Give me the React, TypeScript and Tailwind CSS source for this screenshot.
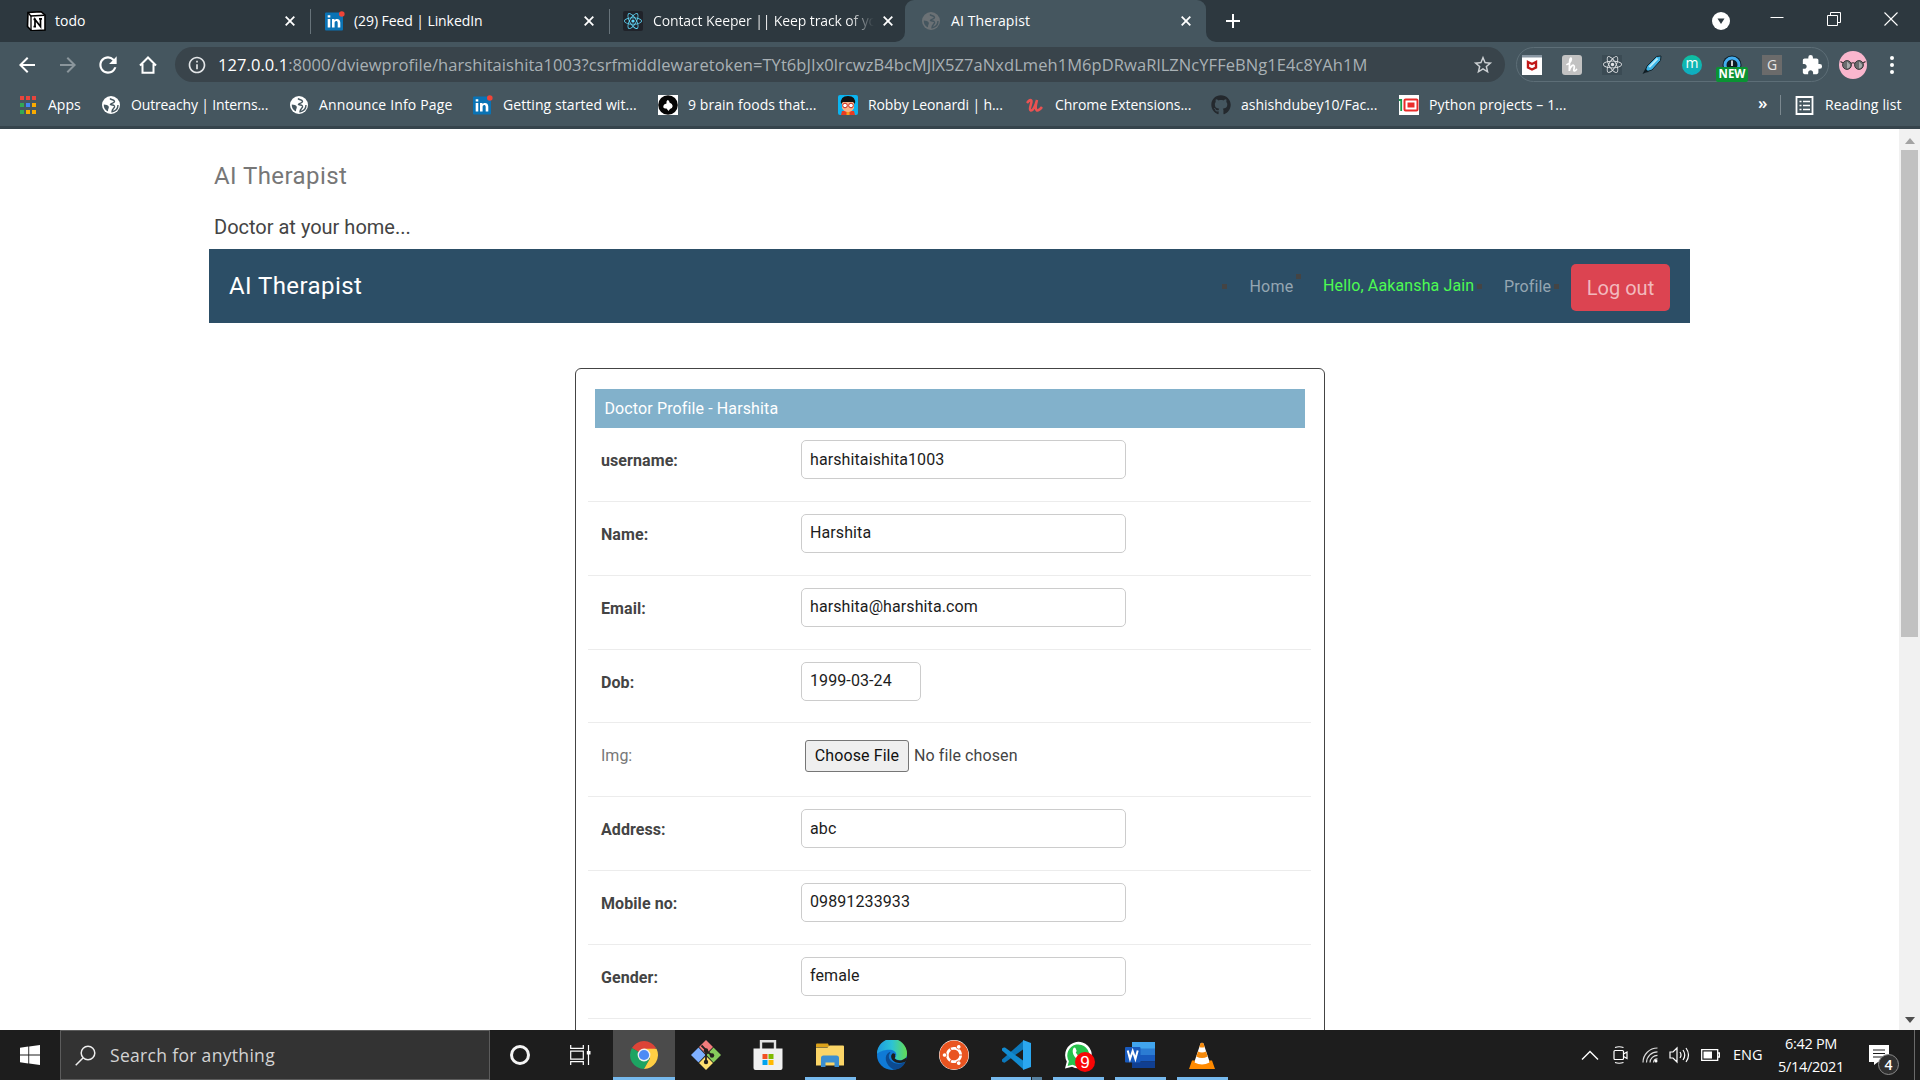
import type { ReactNode } from "react";
import { FaReact, FaGithub, FaUbuntu } from "react-icons/fa";
import { MdArrowBack, MdArrowForward, MdRefresh, MdStarBorder, MdInfoOutline, MdExtension } from "react-icons/md";

function Cell({ className, children }: { className: string; children?: ReactNode }) {
  return <div className={"flex shrink-0 items-center justify-center " + className}>{children}</div>;
}

/* ---------- small brand icons ---------- */

function NotionIcon() {
  return (
    <svg viewBox="0 0 20 20" className="size-5 shrink-0">
      <path d="M2 1.500 15 .6 19 4v15L5.500 19.700 1.500 15.500z" fill="#fff" stroke="#000" strokeWidth="1.600" />
      <path d="M2 1.500 5 5.300v14.200" fill="none" stroke="#000" strokeWidth="1.300" />
      <path d="M4.500 5 18.500 4.300" stroke="#000" strokeWidth="1.600" />
      <path d="M9 15.500V8.500l5.500 7V8M7.500 8.300h2.500M13 7.800h3M7.500 15.700H10" fill="none" stroke="#000" strokeWidth="1.700" />
    </svg>
  );
}

function LinkedinIcon() {
  return (
    <svg viewBox="0 0 20 20" className="size-5 shrink-0 overflow-visible">
      <rect x="0" y="1.500" width="18" height="18" rx="1" fill="#0a73b5" />
      <path d="M2.700 8h2.600v8.500H2.700zM2.700 4.300h2.600v2.300H2.700zM7 8h2.500v1.200C10.800 7.200 15.300 7.200 15.300 11.500v5h-2.600v-4.600c0-2.700-3.100-2.400-3.100 0v4.600H7z" fill="#fff" />
      <circle cx="16.800" cy="3" r="2.800" fill="#f04438" />
    </svg>
  );
}

function Globe({ fg, bg }: { fg: string; bg: string }) {
  return (
    <svg viewBox="0 0 18 18" className="size-[18px] shrink-0">
      <circle cx="9" cy="9" r="9" fill={fg} />
      <path d="M8 2.500C9.500 4.500 12 3 12.500 5.500c0 1.800-3.500 1.300-4 3 1.500 1 4.500 0 4 2.500-.5 1.500-2.500 2-2.500 4.700 3.500-.5 6-3 6-6.700" fill="none" stroke={bg} strokeWidth="1.400" />
      <path d="M1.800 8.500c2 .2 4.700.7 5 2.300.3 1.500-1 2-.8 4.500C3.300 14.500 1.500 11.500 1.800 8.500z" fill={bg} />
    </svg>
  );
}

function CloseX() {
  return (
    <svg viewBox="0 0 10 10" className="size-[10px] shrink-0">
      <path d="M.7.7 9.300 9.300M9.300.7.700 9.300" stroke="#fff" strokeWidth="1.800" />
    </svg>
  );
}

function AppsGrid() {
  const colors = ["#e8453c", "#e8453c", "#e8453c", "#34a853", "#4285f4", "#f9ab00", "#34a853", "#f9ab00", "#f9ab00"];
  return (
    <div className="grid grid-cols-3 gap-x-[2px] gap-y-[3px]">
      {colors.map((c, i) => (
        <span key={i} className="size-[4px]" style={{ backgroundColor: c }} />
      ))}
    </div>
  );
}

/* ---------- browser chrome ---------- */

function Tabs() {
  return (
    <div className="flex h-[42px] bg-[#2d383f] text-[14px] text-white">
      <div className="flex h-[42px] w-[310px] shrink-0 items-center pl-[26px]">
        <NotionIcon />
        <span className="w-[239px] pb-[2px] pl-[9px]">todo</span>
        <CloseX />
      </div>
      <div className="mt-[9px] h-[25px] w-px bg-[#67737a]" />
      <div className="flex h-[42px] w-[298px] shrink-0 items-center pl-[14px]">
        <LinkedinIcon />
        <span className="w-[239px] pb-[2px] pl-[9px] tracking-[-0.080px]">(29) Feed | LinkedIn</span>
        <CloseX />
      </div>
      <div className="mt-[9px] h-[25px] w-px bg-[#67737a]" />
      <div className="flex h-[42px] w-[297px] shrink-0 items-center pl-[13px]">
        <Cell className="size-5 rounded-[2px] bg-[#20232a]"><FaReact className="size-[18px] text-[#61dafb]" /></Cell>
        <span className="ml-[10px] w-[230px] bg-gradient-to-r from-white from-85% to-transparent to-96% bg-clip-text pb-[2px] tracking-[-0.120px] whitespace-nowrap text-transparent">Contact Keeper || Keep track of yo</span>
        <CloseX />
      </div>
      <div className="relative -ml-[2px] flex h-[42px] w-[301px] shrink-0 items-center rounded-t-[9px] bg-[#45565f] pl-[17px]">
        <Globe fg="#6b7175" bg="#45565f" />
        <span className="w-[241px] pb-[2px] pl-[11px] tracking-[0.100px]">AI Therapist</span>
        <CloseX />
        <svg viewBox="0 0 10 10" className="absolute bottom-0 -left-[10px] size-[10px]"><path d="M10 0v10H0A10 10 0 0 0 10 0" fill="#45565f" /></svg>
        <svg viewBox="0 0 10 10" className="absolute -right-[10px] bottom-0 size-[10px]"><path d="M0 0v10h10A10 10 0 0 1 0 0" fill="#45565f" /></svg>
      </div>
      <Cell className="ml-[11px] w-[32px]">
        <svg viewBox="0 0 16 16" className="size-4"><path d="M8 1v14M1 8h14" stroke="#fff" strokeWidth="2" /></svg>
      </Cell>
      <div className="grow" />
      <Cell className="w-[36px]">
        <svg viewBox="0 0 18 18" className="size-[18px]"><circle cx="9" cy="9" r="9" fill="#fff" /><path d="M5.500 6.500h7L9 12z" fill="#2d383f" /></svg>
      </Cell>
      <Cell className="h-[37px] w-[76px]">
        <svg viewBox="0 0 14 14" className="size-[14px]"><path d="M.500 5.500h13" stroke="#fff" /></svg>
      </Cell>
      <Cell className="h-[37px] w-[37px]">
        <svg viewBox="0 0 14 14" className="size-[14px]"><path d="M.500 3.500h10v10H.5zM3.500 3.500V.5h10v10h-3" fill="none" stroke="#fff" /></svg>
      </Cell>
      <Cell className="-mr-[9px] h-[37px] w-[77px]">
        <svg viewBox="0 0 14 14" className="size-[14px]"><path d="M.500.5l13 13M13.500.5l-13 13" stroke="#fff" strokeWidth="1.100" /></svg>
      </Cell>
    </div>
  );
}

function Toolbar() {
  return (
    <div className="flex h-[45px] items-center bg-[#45565f] text-white">
      <Cell className="ml-[7px] w-[40px]"><MdArrowBack className="size-6" /></Cell>
      <Cell className="w-[41px]"><MdArrowForward className="size-6 text-[#8b969c]" /></Cell>
      <Cell className="w-[40px]"><MdRefresh className="size-[26px]" /></Cell>
      <Cell className="w-[39px]">
        <svg viewBox="0 0 18 18" className="size-[18px]"><path d="M1 9.500 9 1.500l8 8M3.500 8v8.800h11V8" fill="none" stroke="#fff" strokeWidth="2" /></svg>
      </Cell>
      <div className="ml-[8px] flex h-[35px] w-[1330px] items-center rounded-full bg-[#39444b] pl-[12px] text-[#a9b1b5]">
        <MdInfoOutline className="size-5 shrink-0 text-[#e3e6e8]" />
        <span className="w-[1265px] shrink-0 pl-[11px] text-[16.500px] leading-[22px] tracking-[0.065px] whitespace-nowrap">
          <span className="text-white">127.0.0.1</span>:8000/dviewprofile/harshitaishita1003?csrfmiddlewaretoken=TYt6bJIx0lrcwzB4bcMJlX5Z7aNxdLmeh1M6pDRwaRlLZNcYFFeBNg1E4c8YAh1M
        </span>
        <MdStarBorder className="size-[22px] shrink-0 text-[#cdd1d4]" />
      </div>
      <div className="ml-[11px] flex h-[35px] w-[313px] items-center rounded-full border border-[#5d6e77]">
        <Cell className="ml-[-5px] w-[40px]">
          <svg viewBox="0 0 20 20" className="size-5"><path d="M0 0h20v20H0z" fill="#fff" /><path d="M0 0h20v2.500H0z" fill="#8896a2" /><path d="M6 7l4 2 4-2v5.500l-4 2-4-2z" fill="#fff" stroke="#c01818" strokeWidth="2.400" /></svg>
        </Cell>
        <Cell className="w-[40px]">
          <Cell className="size-5 rounded-[3px] bg-[#c2c2c2]">
            <svg viewBox="0 0 20 20" className="size-5"><path d="M5 9.500C8 9 10.500 3.500 8.800 3.200 7.500 3.200 7.500 8 7.300 16c.7-5 4.700-7.500 5-4.500.1 2-1.300 4.500.2 4.500 1 0 1.500-.8 2-1.500" fill="none" stroke="#fff" strokeWidth="1.700" strokeLinecap="round" /></svg>
          </Cell>
        </Cell>
        <Cell className="w-[40px]"><Cell className="size-5 bg-[#3b4b54]"><FaReact className="size-[19px] text-[#e4e6e8]" /></Cell></Cell>
        <Cell className="w-[40px]">
          <svg viewBox="0 0 20 20" className="size-5"><path d="M14.500 1.500 19 1l-.5 4.500L10 15l-5 1.500L3.500 15 5 11z" fill="#3cb4e6" stroke="#14242c" strokeWidth="1" /><path d="M14.500 3 6.500 11.500l1.500 1.200L16.500 4z" fill="#b3ecfb" /><path d="M3.500 13.500 7 17l-3 .500L.5 19z" fill="#101d24" /></svg>
        </Cell>
        <Cell className="w-[40px]"><Cell className="size-5 rounded-full bg-[linear-gradient(#0fbf9f,#0facc4)] pb-[3px] text-[14px] leading-none">m</Cell></Cell>
        <Cell className="relative w-[40px]">
          <svg viewBox="0 0 20 20" className="size-5"><circle cx="10" cy="10" r="9.500" fill="#0c1a22" /><circle cx="10" cy="10" r="7" fill="#101d25" stroke="#43aef0" strokeWidth="3" /><path d="M10 5.500V11" stroke="#fff" strokeWidth="1.600" /></svg>
          <span className="absolute top-[12px] left-[4px] flex h-[15px] w-[32px] items-center justify-center rounded-[2px] bg-[#0a9333] text-[11.500px] leading-none font-bold">NEW</span>
        </Cell>
        <Cell className="w-[40px]"><Cell className="size-5 bg-[#6b6b6b] text-[14px] leading-none text-[#e6e6e6]">G</Cell></Cell>
        <Cell className="w-[40px]"><MdExtension className="size-[22px]" /></Cell>
      </div>
      <Cell className="ml-[10px] w-[28px]">
        <svg viewBox="0 0 28 28" className="size-7"><circle cx="14" cy="14" r="14" fill="#f9b6cd" /><path d="M1.500 10.500 4 12M26.500 10.500 24 12M12 12.500q2-1.500 4 0" stroke="#3a3033" strokeWidth="1.200" fill="none" /><circle cx="8" cy="14" r="4.400" fill="#6a6c6e" stroke="#3a3a3c" strokeWidth="1" /><circle cx="20" cy="14" r="4.400" fill="#6a6c6e" stroke="#3a3a3c" strokeWidth="1" /><path d="M8 10.500v7a3.500 3.500 0 0 0 3-4zM20 10.500v7a3.500 3.500 0 0 0 3-4z" fill="#a7a9aa" /></svg>
      </Cell>
      <Cell className="ml-[23px] w-[4px] flex-col gap-[3px]">
        <i className="size-[4px] rounded-full bg-white" /><i className="size-[4px] rounded-full bg-white" /><i className="size-[4px] rounded-full bg-white" />
      </Cell>
    </div>
  );
}

function Bookmark({ className, icon, label }: { className: string; icon: ReactNode; label: string }) {
  return (
    <div className={"flex shrink-0 items-center whitespace-nowrap " + className}>
      <Cell className="w-5">{icon}</Cell>
      <span className="pb-[2px] pl-[10px]">{label}</span>
    </div>
  );
}

function Bookmarks() {
  return (
    <div className="flex h-[42px] items-center border-b-[3px] border-[#36444c] bg-[#45565f] pb-[3px] pl-[18px] text-[14px] text-white">
      <Bookmark className="w-[83px]" icon={<AppsGrid />} label="Apps" />
      <Bookmark className="w-[188px] tracking-[-0.150px]" icon={<Globe fg="#fff" bg="#45565f" />} label="Outreachy | Interns..." />
      <Bookmark className="w-[184px] tracking-[0.150px]" icon={<Globe fg="#fff" bg="#45565f" />} label="Announce Info Page" />
      <Bookmark className="w-[185px] tracking-[0.080px]" icon={<LinkedinIcon />} label="Getting started wit..." />
      <Bookmark
        className="w-[180px] tracking-[0.060px]"
        icon={<svg viewBox="0 0 20 20" className="size-5"><path d="M0 0h20v20H0z" fill="#fff" /><circle cx="10" cy="10" r="9.800" fill="#050505" /><path d="M9.500 5Q11.500 5 11.500 7.500 14.500 8.500 14.700 11 14.500 13.500 12 14L10.500 16 8.500 13.500Q5 13.500 5.300 11.500 5.500 9 8.500 8.500 8 6 9.500 5z" fill="#fff" /></svg>}
        label="9 brain foods that..."
      />
      <Bookmark
        className="w-[187px] tracking-[-0.120px]"
        icon={<svg viewBox="0 0 20 20" className="size-5"><rect width="20" height="20" rx="2" fill="#0bb4f0" /><path d="M4 16h12l1 4H3z" fill="#e83b22" /><path d="M8.500 16h3v4h-3z" fill="#f6a01c" /><path d="M4 6h12v7q-2 4-6 4t-6-4z" fill="#f7b58a" /><path d="M3 9q-1-8 7-8t7 8l-2-2H5z" fill="#111" /><circle cx="7" cy="10.500" r="2.300" fill="#fff" stroke="#c62818" /><circle cx="13" cy="10.500" r="2.300" fill="#fff" stroke="#c62818" /></svg>}
        label="Robby Leonardi | h..."
      />
      <Bookmark
        className="w-[186px] tracking-[-0.060px]"
        icon={<svg viewBox="0 0 20 20" className="size-5"><path d="M2 8Q5.500 3.500 6.500 6c.5 2-3 8-1 9.300 2.500 1.200 5-5 6.500-10.300-1 4-2 9-.3 10.300 1.800 1 3.800-1.500 5.300-3.300" fill="none" stroke="#ea5252" strokeWidth="2.500" /></svg>}
        label="Chrome Extensions..."
      />
      <Bookmark className="w-[188px]" icon={<FaGithub className="size-5 text-[#24292e]" />} label="ashishdubey10/Fac..." />
      <Bookmark
        className="w-[170px] tracking-[0.100px]"
        icon={<svg viewBox="0 0 20 20" className="size-5"><path d="M0 0h20v20H0z" fill="#fff" /><path d="M0 5h2.200v11" fill="none" stroke="#15984a" strokeWidth="1.800" /><rect x="5.500" y="4.500" width="13" height="11" rx="1" fill="none" stroke="#ea2c2a" strokeWidth="2" /><path d="M8.500 7.500h7v5h-7z" fill="#ea2c2a" /></svg>}
        label="Python projects – 1..."
      />
      <div className="grow" />
      <span className="w-[22px] pb-[4px] text-[17px] font-semibold">»</span>
      <div className="h-5 w-px bg-[#7b888f]" />
      <Cell className="ml-[14px] w-[19px]">
        <svg viewBox="0 0 19 19" className="size-[19px]"><path d="M1.500 1h16v17h-16z" fill="none" stroke="#fff" strokeWidth="1.800" /><path d="M4.500 5.500h2m1.500 0h7M4.500 9.500h2m1.500 0h7M4.500 13.500h2m1.500 0h7" stroke="#fff" strokeWidth="1.700" /></svg>
      </Cell>
      <span className="w-[106px] pb-[2px] pl-[11px] tracking-[0.150px] whitespace-nowrap">Reading list</span>
    </div>
  );
}

/* ---------- page ---------- */

function NavBar() {
  return (
    <div className="ml-[209px] flex h-[74px] w-[1481px] shrink-0 bg-[#2c4e66] text-[16px] text-[#95a6b2]">
      <div className="w-[1013px] pt-[19px] pl-[20px] text-[24px] leading-[36px] tracking-[0.420px] text-white">AI Therapist</div>
      <i className="mt-[35px] size-[5px] bg-[#444]" />
      <span className="w-[69px] pt-[26px] pl-[22.500px] leading-6 tracking-[0.200px]">Home</span>
      <i className="mt-[25px] size-[5px] bg-[#444]" />
      <span className="w-[176px] pt-[25px] pl-[22px] leading-6 tracking-[0.130px] whitespace-nowrap text-[#4dfb52]">Hello, Aakansha Jain</span>
      <i className="mt-[35px] size-[5px] bg-[#444]" />
      <span className="w-[72px] pt-[26px] pl-[22px] leading-6 tracking-[0.100px]">Profile</span>
      <i className="mt-[35px] size-[5px] bg-[#444]" />
      <button className="mt-[15px] ml-[12px] h-[47px] w-[99px] rounded-[5px] bg-[#dc4451] pt-[1px] text-[20px] text-[#f2b9be]">Log out</button>
    </div>
  );
}

function Row({ label, children, plain }: { label: string; children: ReactNode; plain?: boolean }) {
  return (
    <div className="ml-[12px] flex h-[73.800px] w-[723px] border-b border-[#ececec] pl-[13px]">
      <span className={plain ? "w-[200px] pt-[21px] text-[#777]" : "w-[200px] pt-[21px] font-bold tracking-[0.080px] text-[#444]"}>{label}</span>
      {children}
    </div>
  );
}

function Field({ value, short }: { value: string; short?: boolean }) {
  return (
    <div className={"mt-[12px] flex h-[39px] items-center rounded-[5px] border border-[#ccc] pl-[8px] tracking-[0.100px] text-[#1c1c1c] " + (short ? "w-[120px]" : "w-[325px]")}>
      {value}
    </div>
  );
}

function ProfileCard() {
  return (
    <div className="mt-[45px] ml-[575px] h-[760px] w-[750px] shrink-0 rounded-[6px] border border-[#444] pt-[20.200px] text-[16px] leading-6">
      <div className="ml-[19px] h-[39px] w-[710px] bg-[#82b1cb] pt-[8px] pl-[9.500px] tracking-[0.120px] text-white">Doctor Profile - Harshita</div>
      <Row label="username:"><Field value="harshitaishita1003" /></Row>
      <Row label="Name:"><Field value="Harshita" /></Row>
      <Row label="Email:"><Field value="harshita@harshita.com" /></Row>
      <Row label="Dob:"><Field value="1999-03-24" short /></Row>
      <Row label="Img:" plain>
        <div className="mt-[17px] ml-[4px] flex h-[32px] w-[104px] items-center justify-center rounded-[3px] border border-[#767676] bg-[#efefef] tracking-[0.100px] text-[#111]">Choose File</div>
        <span className="mt-[21px] ml-[5px] tracking-[0.100px] text-[#444]">No file chosen</span>
      </Row>
      <Row label="Address:"><Field value="abc" /></Row>
      <Row label="Mobile no:"><Field value="09891233933" /></Row>
      <Row label="Gender:"><Field value="female" /></Row>
    </div>
  );
}

function Page() {
  return (
    <div className="flex h-[901px] overflow-hidden bg-white font-['Roboto',sans-serif]">
      <div className="flex h-full w-[1899px] flex-col overflow-hidden">
        <div className="h-[120px] shrink-0 pt-[28px] pl-[214px]">
          <div className="text-[24px] leading-[38px] tracking-[0.420px] text-[#777]">AI Therapist</div>
          <div className="mt-[17px] text-[20px] leading-[30px] text-[#444]">Doctor at your home...</div>
        </div>
        <NavBar />
        <ProfileCard />
      </div>
      <div className="flex w-[21px] flex-col items-center bg-[#f1f1f1]">
        <Cell className="h-[21px]"><svg viewBox="0 0 10 6" className="mt-[3px] h-[6px] w-[10px]"><path d="M0 6 5 0l5 6z" fill="#a3a3a3" /></svg></Cell>
        <div className="h-[487px] w-[17px] bg-[#c1c1c1]" />
        <div className="grow" />
        <Cell className="h-[21px]"><svg viewBox="0 0 10 6" className="h-[6px] w-[10px]"><path d="M0 0h10L5 6z" fill="#505050" /></svg></Cell>
      </div>
    </div>
  );
}

/* ---------- taskbar ---------- */

function TaskIcon({ children, state }: { children: ReactNode; state?: "active" | "open" | "multi" }) {
  return (
    <div className={"flex h-[50px] w-[62px] shrink-0 flex-col items-center " + (state === "active" ? "bg-[#4b4b4b]" : "")}>
      <Cell className="h-[47px] pt-[3px]">{children}</Cell>
      {state === "active" && <div className="h-[3px] w-full bg-[#76b9ed]" />}
      {state === "open" && <div className="h-[3px] w-[51px] bg-[#76b9ed]" />}
      {state === "multi" && (
        <div className="flex h-[3px] w-[51px] bg-[#56809f]"><div className="h-[3px] w-[41px] border-r border-[#1d1d1d] bg-[#76b9ed]" /></div>
      )}
    </div>
  );
}

function TaskIcons() {
  return (
    <div className="flex">
      <TaskIcon state="active">
        <svg viewBox="0 0 28 28" className="size-7">
          <path d="M14 14 1.900 7A14 14 0 0 1 26.100 7z" fill="#dc4437" />
          <path d="M14 14 1.900 7A14 14 0 0 0 14 28l6-10.500z" fill="#1da462" />
          <path d="M14 7.700h12.500A14 14 0 0 1 14 28l6-10.500z" fill="#ffce44" />
          <circle cx="14" cy="14" r="6.400" fill="#f1f1f1" /><circle cx="14" cy="14" r="5.100" fill="#4c8bf5" />
        </svg>
      </TaskIcon>
      <TaskIcon>
        <svg viewBox="0 0 30 30" className="size-[30px]">
          <path d="M15 0l7 7-7 7-7-7z" fill="#f37c7c" /><path d="M7.500 7.500l7 7.500-7 7.500L0 15z" fill="#7fb0ff" /><path d="M22.500 7.500 30 15l-7.500 7.500-7-7.500z" fill="#86cb5c" /><path d="M15 16l7 7-7 7-7-7z" fill="#ffe070" />
          <path d="M10.500 5.500l4.500 4.500v13M15 10.500l6 5" stroke="#24201f" strokeWidth="1.800" fill="none" /><circle cx="15" cy="10.500" r="2.200" fill="#24201f" /><circle cx="21" cy="15.500" r="2.200" fill="#24201f" /><circle cx="15" cy="22" r="2.200" fill="#24201f" />
        </svg>
      </TaskIcon>
      <TaskIcon>
        <svg viewBox="0 0 30 30" className="size-[30px]">
          <path d="M8 9V1.200h14V9" fill="none" stroke="#e2e2e2" strokeWidth="2.400" /><path d="M.500 8.500h29V28a2 2 0 0 1-2 2h-25a2 2 0 0 1-2-2z" fill="#f0f0f0" />
          <path d="M9.500 14H14.500v5h-5z" fill="#f25022" /><path d="M15.500 14h5v5h-5z" fill="#7fba00" /><path d="M9.500 20h5v5h-5z" fill="#00a4ef" /><path d="M15.500 20h5v5h-5z" fill="#ffb900" />
        </svg>
      </TaskIcon>
      <TaskIcon state="open">
        <svg viewBox="0 0 28 24" className="h-6 w-7">
          <path d="M0 1.500Q0 .5 1 .5h11l1.500 3.500H0z" fill="#dca21a" /><path d="M0 4.500h11.500L13.500 2.500H27q1 0 1 1V22.500H0z" fill="#fbd567" /><path d="M5 24v-9q0-2.500 2.500-2.500h13Q23 12.500 23 15v9h-4.500v-4.500h-9V24z" fill="#3c8fd0" />
        </svg>
      </TaskIcon>
      <TaskIcon>
        <svg viewBox="0 0 30 30" className="size-[30px]">
          <defs>
            <linearGradient id="edgeTop" x1="0" x2="1"><stop offset="0" stopColor="#1d9ae0" /><stop offset=".5" stopColor="#2cc3d5" /><stop offset="1" stopColor="#63dd52" /></linearGradient>
          </defs>
          <circle cx="15" cy="15" r="15" fill="#0f7ad6" />
          <path d="M0 14A15 15 0 0 1 30 13.500c0 4.500-3 6.700-6.500 6.700-3 0-5.500-.9-5.500-2.200 0-.8 1.300-1.200 1.300-3.300 0-3-3-5-7-5C6 9.700 2 12 0 14z" fill="url(#edgeTop)" />
          <path d="M12.500 12c-6 3-5 13 4.500 17.800C26 29 28 23 28 22c-7 3.500-14 1-16-4-.6-2.500.3-4.500 1.500-5.500z" fill="#0c4a90" />
          <path d="M18 15q.5 1.500-.3 3.500 2 2.300 7 1.800l5-2.800v3L28 22q-8.500 3-13-2.500-2-4 .5-6 2-.8 3 1.500z" fill="#1d1d1d" />
        </svg>
      </TaskIcon>
      <TaskIcon>
        <FaUbuntu className="size-[30px] rounded-full bg-white text-[#e95420]" />
      </TaskIcon>
      <TaskIcon state="multi">
        <svg viewBox="0 0 30 30" className="size-[30px]">
          <path d="M1 19.500 22 1v8.500L4 22.500Q2.500 23 1 21.500z" fill="#0c78bb" /><path d="M1 10.500 22 29v-8.500L4 7.500Q2.500 7 1 8.500z" fill="#128bd0" /><path d="M22 0l8 3v24l-8 3z" fill="#2ba7ef" />
        </svg>
      </TaskIcon>
      <TaskIcon state="open">
        <div className="relative">
          <svg viewBox="0 0 30 30" className="size-[30px]"><path d="M2 28.500l1.800-7A13.300 13.300 0 1 1 9 26.700z" fill="#fff" /><path d="M4.600 26l1.300-4.800A11 11 0 1 1 9.500 24.800z" fill="#27c24c" /><path d="M10.500 8q1-1 2 0l1.200 3-1 1.500q1.600 3.300 5 4.700l1.600-1.500 3 1.500q.3 3-3.500 3.500C13 20.500 7.500 13 10.500 8z" fill="#fff" /></svg>
          <span className="absolute top-[12px] left-[12px] flex size-5 items-center justify-center rounded-full bg-[#f90606] font-['Liberation_Sans'] text-[17px] leading-none text-white">9</span>
        </div>
      </TaskIcon>
      <TaskIcon state="open">
        <svg viewBox="0 0 30 26" className="h-[26px] w-[30px]">
          <path d="M7 0h23v7H7z" fill="#41a5ee" /><path d="M7 6.500h23V13H7z" fill="#2b7cd3" /><path d="M7 13h23v6.500H7z" fill="#185abd" /><path d="M7 19.500h23V26H7z" fill="#103f91" /><rect y="5" width="15.500" height="15.500" rx="1" fill="#185abd" />
          <path d="M2.700 8.500 5 17l2.700-8 2.700 8 2.300-8.500" fill="none" stroke="#fff" strokeWidth="2" />
        </svg>
      </TaskIcon>
      <TaskIcon state="open">
        <svg viewBox="0 0 26 27" className="h-[27px] w-[26px]">
          <path d="M11.500 1.500q1.500-1.500 3 0L21 21q-8 5-16 0z" fill="#fff" /><path d="M11.500 1.500q1.500-1.500 3 0l1.200 3.500q-2.700 1.200-5.400 0zM9 9.500q4 2 8 0l1.700 5q-5.700 3-11.400 0z" fill="#f58a0c" /><path d="M3 18.500h3l-.5 2q7.500 4 15 0l-.5-2h3L26 27H0z" fill="#ff8a00" />
        </svg>
      </TaskIcon>
    </div>
  );
}

function Tray() {
  return (
    <div className="flex h-[50px] items-center text-white">
      <svg viewBox="0 0 18 10" className="h-[10px] w-[18px]"><path d="M1 9.500l8-8 8 8" fill="none" stroke="#fff" strokeWidth="1.400" /></svg>
      <svg viewBox="0 0 16 18" className="ml-[14px] h-[18px] w-[16px]"><rect x="1" y="4.500" width="9.500" height="9" rx="1" fill="none" stroke="#fff" strokeWidth="1.200" /><path d="M10.500 8l3.500-2v6.500l-3.500-2M2 1.500Q6 0 10.500 1.500M2 16.500q4 1.500 8.500 0" fill="none" stroke="#fff" strokeWidth="1.200" /></svg>
      <svg viewBox="0 0 16 16" className="ml-[13px] size-4"><path d="M1 15.500A14.500 14.500 0 0 1 15.500 1M4.500 15.500A11 11 0 0 1 15.500 4.800M8 15.500a7.500 7.500 0 0 1 7.500-7.200M11.500 15.500a4 4 0 0 1 4-3.700" fill="none" stroke="#ddd" strokeWidth="1.200" /><circle cx="14" cy="14" r="1.500" fill="#fff" /></svg>
      <svg viewBox="0 0 21 18" className="ml-[11px] h-[18px] w-[21px]"><path d="M1 6h3l4-4v14l-4-4H1zM11 6q2 3 0 6M14 4q3.500 5 0 10M17 2q5 7 0 14" fill="none" stroke="#fff" strokeWidth="1.200" /></svg>
      <svg viewBox="0 0 19 12" className="ml-[11px] h-[12px] w-[19px]"><path d="M.700.7h16v10.600H.7zM17 4h1.500v4H17" fill="none" stroke="#fff" strokeWidth="1.300" /><path d="M2.500 2.500h8.500v7H2.500z" fill="#fff" /></svg>
      <span className="ml-[13px] w-[43px] pb-[1px] text-[14.500px]">ENG</span>
      <div className="w-[70px] text-center text-[14.500px] leading-[23px] tracking-[-0.300px] whitespace-nowrap"><div>6:42 PM</div><div>5/14/2021</div></div>
      <div className="relative ml-[23px] h-[50px] w-[45px]">
        <svg viewBox="0 0 20 21" className="mt-[15px] h-[21px] w-[20px]"><path d="M0 0h20v17H9l-4 3v-3H0z" fill="#fff" /><path d="M4 5h12M4 8.500h12M4 12h12" stroke="#1d1d1d" strokeWidth="1.200" /></svg>
        <span className="absolute top-[24px] left-[9px] flex size-[21px] items-center justify-center rounded-full border border-[#8a8a8a] bg-[#303030] text-[14px] leading-none font-semibold">4</span>
      </div>
      <div className="h-[50px] w-px bg-[#6a6a6a]" />
    </div>
  );
}

function Taskbar() {
  return (
    <div className="flex h-[50px] bg-[#1d1d1d]">
      <Cell className="w-[60px]">
        <svg viewBox="0 0 20 20" className="size-5"><path d="M0 2.800l8.300-1.200v8H0zM9.200 1.500 20 0v9.600H9.200zM0 10.500h8.300v8L0 17.200zM9.200 10.500H20V20L9.200 18.500z" fill="#fff" /></svg>
      </Cell>
      <div className="flex w-[430px] items-center border border-[#5c5c5c] bg-[#333] pl-[14px] text-[17.500px] text-[#d3d3d3]">
        <svg viewBox="0 0 21 21" className="size-[21px]"><circle cx="13" cy="8" r="6.800" fill="none" stroke="#eee" strokeWidth="1.500" /><path d="M8.200 12.800.700 20.300" stroke="#eee" strokeWidth="1.500" /></svg>
        <span className="pl-[14px] tracking-[0.320px]">Search for anything</span>
      </div>
      <Cell className="w-[60px]"><div className="size-[20px] rounded-full border-[3px] border-[#f4f4f4]" /></Cell>
      <Cell className="w-[63px] pr-[3px]">
        <svg viewBox="0 0 21 20" className="h-5 w-[21px]"><path d="M.700 0v3.300h12.600V0M.700 6.200h12.600v8H.7zM.700 20v-3.300h12.600V20M18.500 0v20" fill="none" stroke="#fff" strokeWidth="1.200" /><path d="M16.800 6h3.700v3.500h-3.700z" fill="#fff" /></svg>
      </Cell>
      <TaskIcons />
      <div className="grow" />
      <Tray />
      <div className="w-[5px]" />
    </div>
  );
}

export default function App() {
  return (
    <div className="h-[1080px] w-[1920px] overflow-hidden font-['Open_Sans',sans-serif]">
      <Tabs />
      <Toolbar />
      <Bookmarks />
      <Page />
      <Taskbar />
    </div>
  );
}
